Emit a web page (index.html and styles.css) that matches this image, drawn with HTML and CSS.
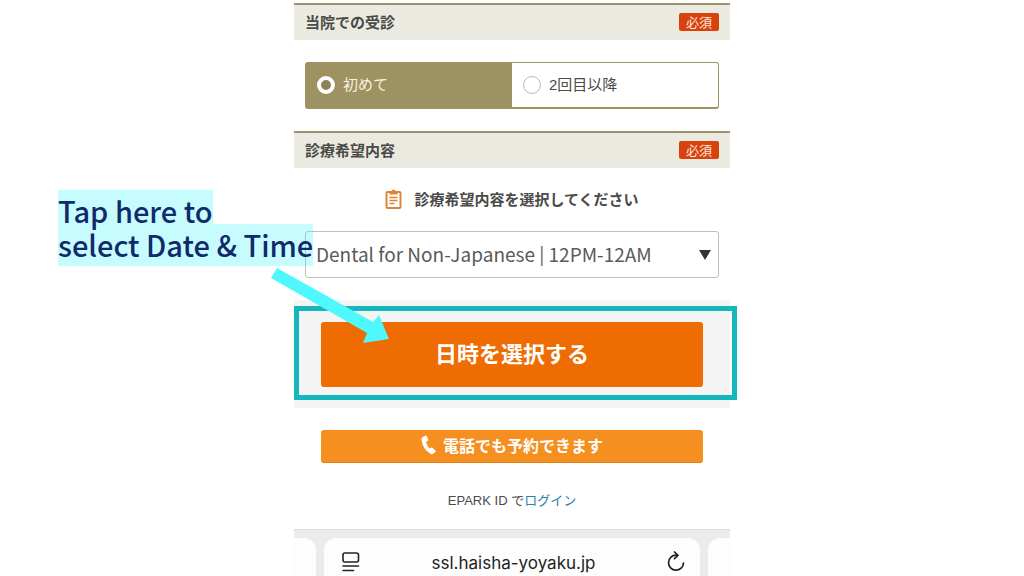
FILE: index.html
```html
<!DOCTYPE html>
<html lang="ja">
<head>
<meta charset="utf-8">
<meta name="viewport" content="width=device-width, initial-scale=1">
<title>ssl.haisha-yoyaku.jp</title>
<link rel="stylesheet" href="styles.css">
</head>
<body>
<main class="phone">
  <form class="form">
    <section class="section">
      <header class="bar"><h2 class="bar-title" id="visit">当院での受診</h2><span class="required">必須</span></header>
      <div class="choices" role="radiogroup" aria-labelledby="visit">
        <label class="choice"><input class="radio" type="radio" name="visit" checked><span>初めて</span></label>
        <label class="choice"><input class="radio" type="radio" name="visit"><span>2回目以降</span></label>
      </div>
    </section>
    <section class="section">
      <header class="bar"><h2 class="bar-title">診療希望内容</h2><span class="required">必須</span></header>
      <label class="prompt" for="menu">
        <svg class="clipboard" viewBox="0 0 16 20" aria-hidden="true">
          <rect x="1" y="3" width="14" height="16" rx="1" fill="none" stroke="#dc8438" stroke-width="2"/>
          <path d="M4 5.500V2.500H6A2 2 0 0 1 10 2.500H12V5.500Z" fill="#dc8438"/>
          <path d="M4 8.500H12M4 11.500H12M4 14.500H9" stroke="#dc8438" stroke-width="1.500"/>
        </svg>
        <span>診療希望内容を選択してください</span>
      </label>
      <div class="select-wrap">
        <select class="select" id="menu"><option>Dental for Non-Japanese | 12PM-12AM</option></select>
        <svg class="caret" viewBox="0 0 12 10" aria-hidden="true"><path d="M0 0H12L6 10Z" fill="#333"/></svg>
      </div>
    </section>
    <div class="band">
      <button class="submit" type="submit">日時を選択する</button>
      <div class="frame"></div>
    </div>
    <button class="call" type="button">
      <svg class="handset" viewBox="0 0 16 20" aria-hidden="true"><path d="M1.500 2.200 4.500 .6Q5.300 .3 5.700 1L7.200 4.600Q7.400 5.300 6.800 5.700L5 7Q6 11 8.700 13.500L10.600 12.600Q11.400 12.300 11.900 12.900L14.500 15.800Q15 16.500 14.400 17L11.700 19.100Q10.800 19.600 9.800 19Q1.500 14.500 .5 4.500Q.3 3 1.500 2.200Z" fill="#fff"/></svg>
      <span>電話でも予約できます</span>
    </button>
    <p class="login">EPARK ID で<a class="link" href="#login">ログイン</a></p>
  </form>
  <footer class="browser">
    <div class="tab tab-prev"></div>
    <div class="tab tab-current">
      <button class="icon-button" type="button" aria-label="ページメニュー">
        <svg class="icon" viewBox="0 0 20 22" aria-hidden="true"><g fill="none" stroke="#222" stroke-width="1.600" stroke-linecap="round"><rect x="2" y="2" width="15.500" height="9" rx="2"/><path d="M2 15H17.500M2 19.500H12.500"/></g></svg>
      </button>
      <span class="address">ssl.haisha-yoyaku.jp</span>
      <button class="icon-button" type="button" aria-label="再読み込み">
        <svg class="icon" viewBox="0 0 20 22" aria-hidden="true"><g fill="none" stroke="#222" stroke-width="1.700" stroke-linecap="round" stroke-linejoin="round"><path d="M11 4.200H10A7.500 7.500 0 1 0 17.500 12"/><path d="M8.500 1 12 4.300 8.500 7.600"/></g></svg>
      </button>
    </div>
    <div class="tab tab-next"></div>
  </footer>
  <p class="callout"><span class="mark mark-first">Tap here to</span><span class="mark">select Date &amp; Time</span></p>
  <svg class="arrow" viewBox="0 0 120 78" aria-hidden="true"><path d="M7 2 103 56 109 49 119 73 93 77 97 67 1 12Z" fill="#4ff8fd"/></svg>
</main>
</body>
</html>
```
FILE: styles.css
```css
* { box-sizing: border-box; }

body {
  margin: 0;
  background: #fff;
  color: #4a4a48;
  font-family: "Noto Sans CJK JP", sans-serif;
  font-size: 15px;
  line-height: 20px;
}

button, select, input { margin: 0; font: inherit; }

.phone {
  position: relative;
  display: flex;
  flex-direction: column;
  max-width: 436px;
  min-height: 100vh;
  margin: 0 auto;
  padding-top: 3px;
}

.form { display: flex; flex-direction: column; }

.bar {
  display: flex;
  align-items: center;
  justify-content: space-between;
  padding: 7px 11px 8px;
  border-top: 2px solid #9c9269;
  background: #ebeae1;
}

.bar-title { margin: 0; font-size: 15px; font-weight: 700; }

.required {
  padding: 0 7px;
  border-radius: 2px;
  background: #d9420f;
  color: #ffe9df;
  font-size: 13px;
  line-height: 18px;
}

.choices {
  display: flex;
  margin: 22px 11px;
  border: 1px solid #9e9262;
  border-bottom-width: 2px;
  border-radius: 3px;
}

.choice {
  display: flex;
  flex: 1;
  align-items: center;
  gap: 8px;
  padding: 12px 11px;
  font-family: "Liberation Sans", "Noto Sans CJK JP", sans-serif;
}

.choice:has(:checked) { background: #9e9262; color: #f7f3dc; }

.radio {
  appearance: none;
  width: 18px;
  height: 18px;
  border: 1px solid #bbb;
  border-radius: 50%;
  background: #fff;
}

.radio:checked { border: 4px solid #fff; background: #8d8358; }

.prompt {
  display: flex;
  align-items: center;
  justify-content: center;
  gap: 12px;
  padding: 21px 0 22px;
  font-weight: 700;
}

.clipboard { width: 17px; height: 20px; }

.select-wrap { position: relative; margin: 0 11px 22px; }

.select {
  appearance: none;
  display: block;
  width: 100%;
  padding: 10px 10px 11px;
  border: 1px solid #bfbfbf;
  border-radius: 3px;
  background: #fff;
  color: #5a5a5a;
  font-size: 19px;
  line-height: 24px;
}

.caret {
  position: absolute;
  top: 50%;
  right: 8px;
  width: 12px;
  height: 10px;
  margin-top: -5px;
}

.band {
  position: relative;
  padding: 22px 27px 21px;
  background: #f4f4f4;
}

.submit {
  display: block;
  width: 100%;
  padding: 14px 0 19px;
  border: 0;
  border-radius: 3px;
  background: #ee6c02;
  color: #fff;
  font-size: 22px;
  font-weight: 700;
  line-height: 32px;
}

.frame {
  position: absolute;
  top: 6px;
  right: -7px;
  bottom: 8px;
  left: 0;
  border: 5px solid #14b8bc;
  pointer-events: none;
}

.call {
  display: flex;
  align-items: center;
  justify-content: center;
  gap: 6px;
  margin: 22px 27px 28px;
  padding: 5px 0 7px;
  border: 0;
  border-bottom: 1px solid #e0821b;
  border-radius: 3px;
  background: #f58f20;
  color: #fff;
  font-size: 16px;
  font-weight: 700;
}

.handset { width: 16px; height: 20px; }

.login {
  margin: 0 0 18px;
  font-family: "Liberation Sans", "Noto Sans CJK JP", sans-serif;
  font-size: 13px;
  text-align: center;
}

.link { color: #2583a8; text-decoration: none; }

.browser {
  display: flex;
  flex: 1;
  gap: 8px;
  padding-top: 8px;
  overflow: hidden;
  border-top: 1px solid #ddd;
  background: #ebebeb;
}

.tab { flex: 0 0 22px; background: #fdfdfd; }
.tab-prev { border-top-right-radius: 12px; }
.tab-next { border-top-left-radius: 12px; }

.tab-current {
  display: flex;
  flex: 1;
  align-items: flex-start;
  justify-content: space-between;
  padding: 13px 14px 0 17px;
  border-radius: 12px 12px 0 0;
}

.icon-button { padding: 0; border: 0; background: none; }
.icon { display: block; width: 20px; height: 22px; }

.address {
  color: #222;
  font-family: Inter, sans-serif;
  font-size: 17px;
  line-height: 24px;
}

.callout {
  position: absolute;
  top: 190px;
  left: -236px;
  margin: 0;
  color: #102a6b;
  font-size: 29px;
  font-weight: 500;
  white-space: nowrap;
}

.mark {
  display: block;
  width: fit-content;
  padding-bottom: 2px;
  background: rgba(70, 245, 255, 0.3);
  line-height: 40px;
}

.mark-first { padding: 6px 0 0; line-height: 28px; }

.arrow {
  position: absolute;
  top: 266px;
  left: -24px;
  width: 120px;
  height: 78px;
}
```
